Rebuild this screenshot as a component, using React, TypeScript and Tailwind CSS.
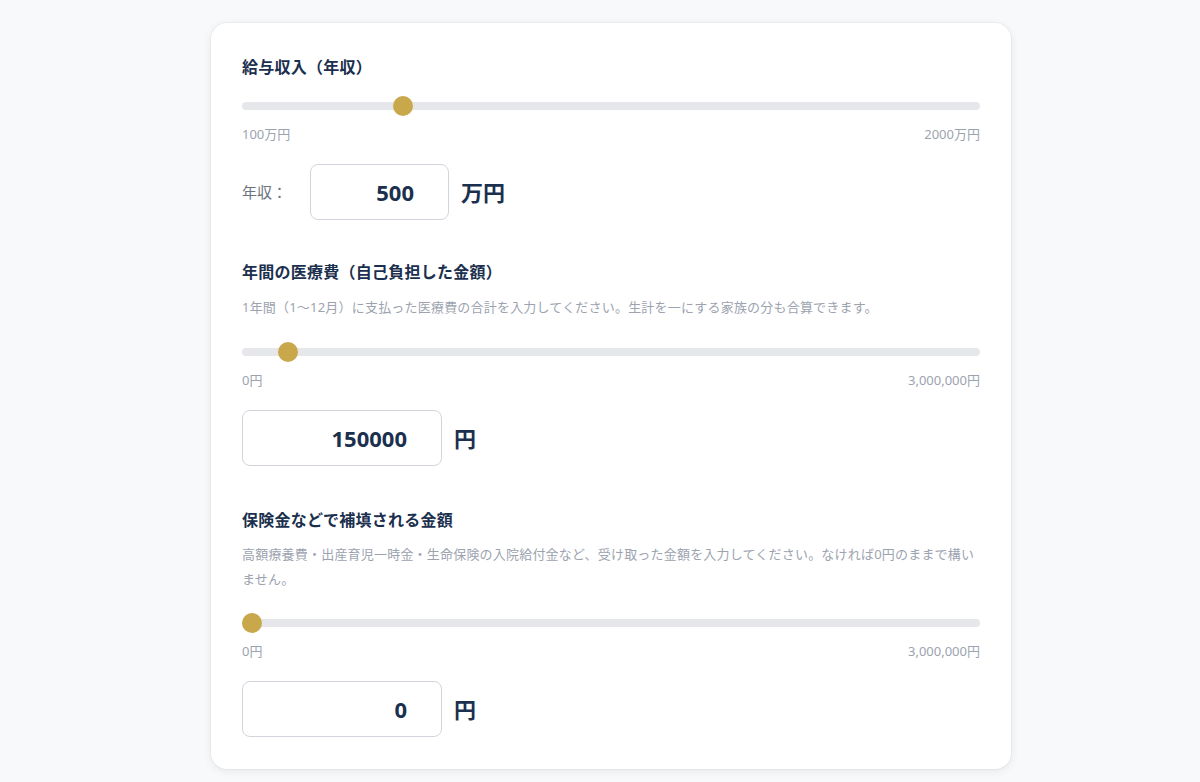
import { useState } from 'react';

type SliderProps = {
  value: number;
  min: number;
  max: number;
  minLabel: string;
  maxLabel: string;
};

const FONT = { fontFamily: '"Noto Sans", "Noto Sans CJK JP", sans-serif' };

function Slider({ value, min, max, minLabel, maxLabel }: SliderProps) {
  const ratio = (value - min) / (max - min);
  return (
    <div>
      <div className="relative h-5 flex items-center">
        <div className="w-full h-2 rounded-full bg-[#e5e7eb]" />
        <div
          className="absolute top-0 w-5 h-5 rounded-full bg-[#c9a84c]"
          style={{ left: `calc(${ratio} * (100% - 20px))` }}
        />
      </div>
      <div className="flex justify-between mt-2 text-[13px] leading-5 text-[#9ca3af]">
        <span>{minLabel}</span>
        <span>{maxLabel}</span>
      </div>
    </div>
  );
}

function AmountInput({ value, unit, width }: { value: number; unit: string; width: string }) {
  const [v, setV] = useState(String(value));
  return (
    <div className="flex items-center gap-3">
      <input
        className={`${width} h-14 border border-[#d1d5db] rounded-lg pl-4 pr-[34px] text-right text-[22px] font-bold text-[#1b2f4e] outline-none`}
        style={FONT}
        value={v}
        onChange={e => setV(e.target.value)}
      />
      <span className="text-[22px] font-bold text-[#1b2f4e]">{unit}</span>
    </div>
  );
}

export default function App() {
  return (
    <div className="h-[782px] overflow-hidden bg-[#f8f9fa] pt-[23px] pl-[22px]" style={FONT}>
      <div className="max-w-[800px] mx-auto bg-white rounded-2xl shadow-[0_0_0_1px_rgba(0,0,0,0.03),0_2px_10px_rgba(0,0,0,0.08)] px-[31px] pt-8 pb-8">
        <section>
          <h2 className="text-base leading-6 font-bold text-[#1b2f4e] tracking-[0.25px]">給与収入（年収）</h2>
          <div className="mt-[17px]">
            <Slider value={500} min={100} max={2000} minLabel="100万円" maxLabel="2000万円" />
          </div>
          <div className="flex items-center gap-3 mt-5">
            <span className="text-[15px] text-[#6b7280] pr-[11px]">年収：</span>
            <AmountInput value={500} unit="万円" width="w-[139px]" />
          </div>
        </section>

        <section className="mt-10">
          <h2 className="text-base leading-6 font-bold text-[#1b2f4e] tracking-[0.25px]">年間の医療費（自己負担した金額）</h2>
          <p className="mt-[11px] text-[13px] leading-[25px] tracking-[0.2px] text-[#9ca3af]">
            1年間（1〜12月）に支払った医療費の合計を入力してください。生計を一にする家族の分も合算できます。
          </p>
          <div className="mt-[22px]">
            <Slider value={150000} min={0} max={3000000} minLabel="0円" maxLabel="3,000,000円" />
          </div>
          <div className="mt-5">
            <AmountInput value={150000} unit="円" width="w-[200px]" />
          </div>
        </section>

        <section className="mt-[42px]">
          <h2 className="text-base leading-6 font-bold text-[#1b2f4e] tracking-[0.25px]">保険金などで補填される金額</h2>
          <p className="mt-[10px] text-[13px] leading-[25px] tracking-[0.2px] text-[#9ca3af]">
            高額療養費・出産育児一時金・生命保険の入院給付金など、受け取った金額を入力してください。なければ0円のままで構いません。
          </p>
          <div className="mt-[21px]">
            <Slider value={0} min={0} max={3000000} minLabel="0円" maxLabel="3,000,000円" />
          </div>
          <div className="mt-5">
            <AmountInput value={0} unit="円" width="w-[200px]" />
          </div>
        </section>
      </div>
    </div>
  );
}
